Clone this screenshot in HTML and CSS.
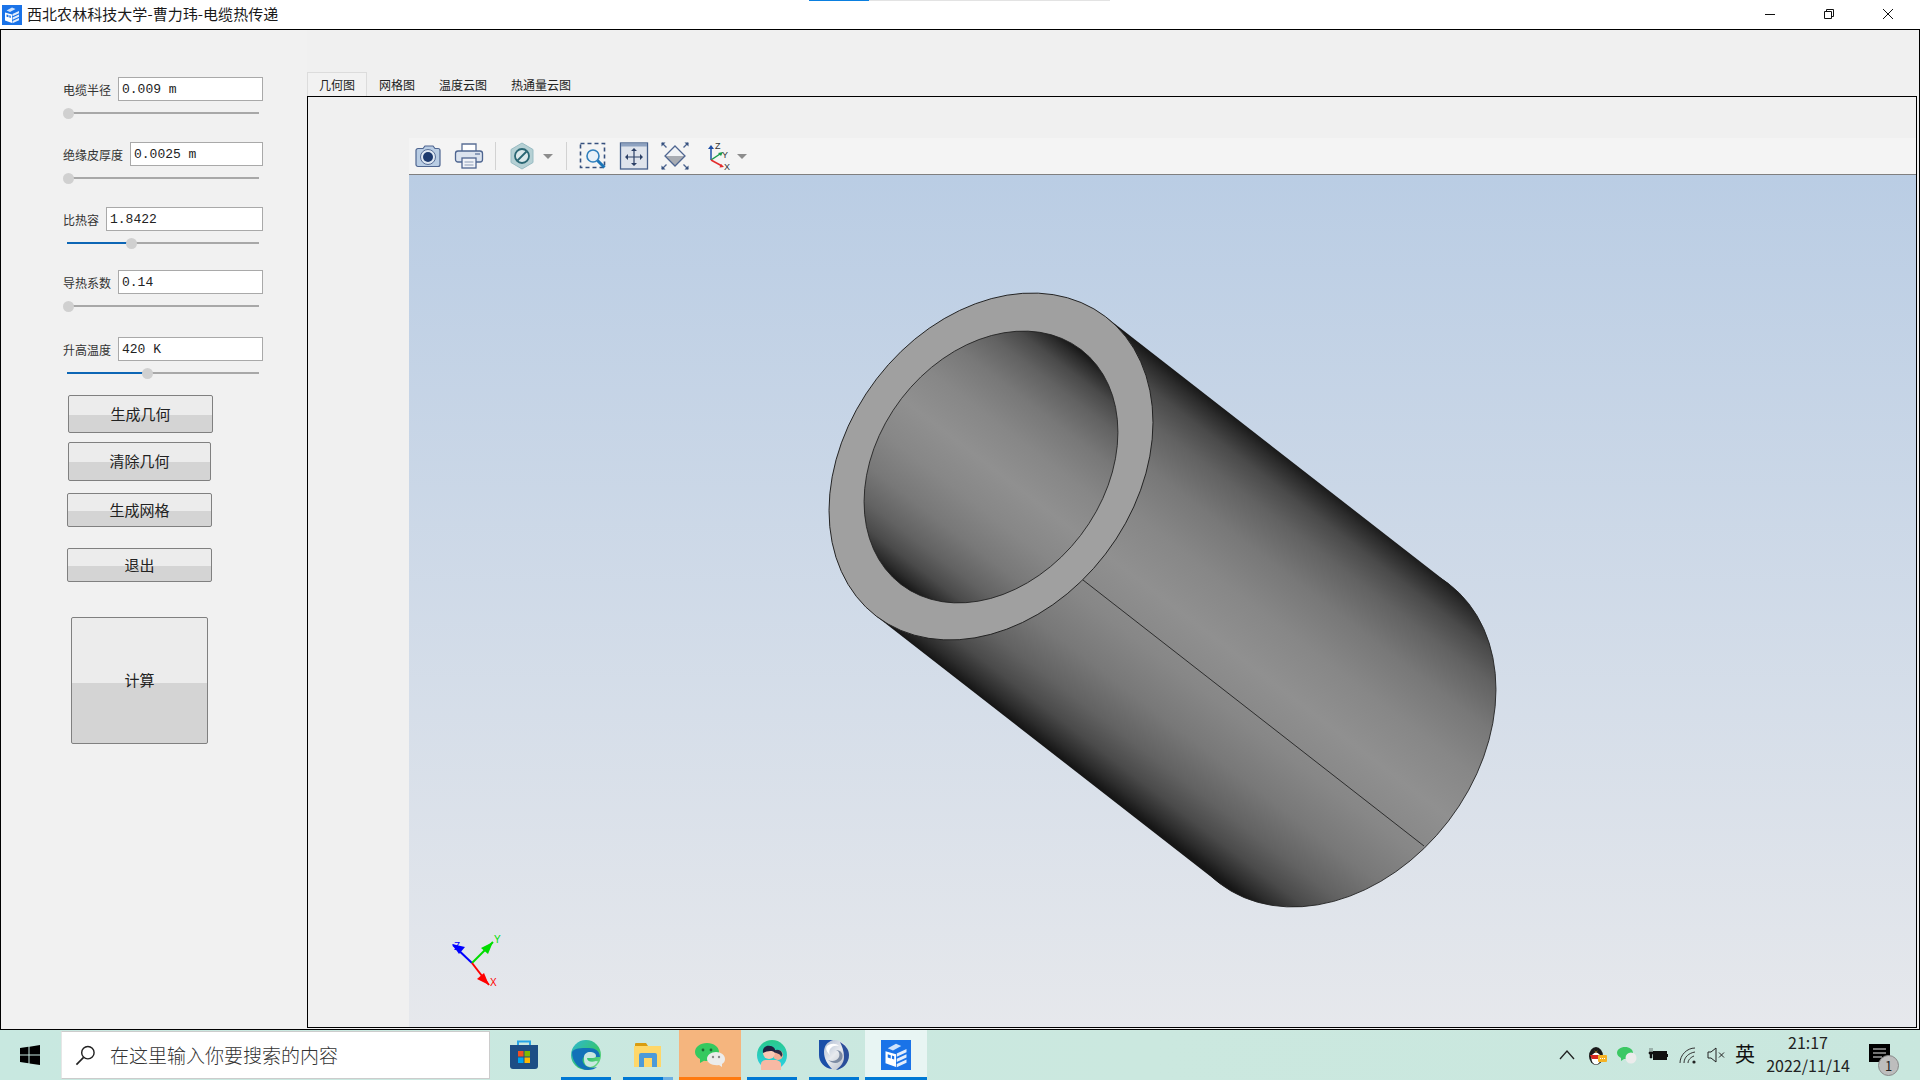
FILE: index.html
```html
<!DOCTYPE html>
<html lang="zh-CN">
<head>
<meta charset="utf-8">
<title>西北农林科技大学-曹力玮-电缆热传递</title>
<link rel="stylesheet" href="styles.css">
</head>
<body>
<div class="screen">
  <header class="titlebar">
    <svg class="title-icon" viewBox="0 0 20 20"><rect width="20" height="20" fill="#1a73e8"/><path d="M4.500 5.500L10 2.500l3.500 1.500L8 7z" fill="#cfe2fb"/><path d="M3 7.500L10 9.500V18L3 15.500z" fill="#fff"/><path d="M4.500 9.500l2 .6v2.200l-2-.6zM7.300 10.300l1.500.5V13l-1.500-.5z" fill="#1a73e8"/><path d="M10.500 9l6.500-3v2.200l-6.500 3zM10.500 12.500l6.500-3v2.200l-6.500 3zM10.500 16l6.500-3v2.200l-6.500 3z" fill="#e4eefc"/></svg>
    <span class="title-text">西北农林科技大学-曹力玮-电缆热传递</span>
    <div class="progress"><span class="progress-on"></span></div>
    <div class="winbtns">
      <svg class="winbtn" viewBox="0 0 12 12"><path d="M1 6.500h10" stroke="#111" fill="none"/></svg>
      <svg class="winbtn" viewBox="0 0 12 12"><path d="M1.500 3.500h7v7h-7zM3.500 3.500v-2h7v7h-2" stroke="#111" fill="none"/></svg>
      <svg class="winbtn" viewBox="0 0 12 12"><path d="M1 1l10 10M11 1L1 11" stroke="#111" fill="none"/></svg>
    </div>
  </header>

  <main class="window">
    <aside class="panel">
      <section class="field field-a">
        <div class="row"><label class="lbl">电缆半径</label><div class="input">0.009 m</div></div>
        <div class="slider"><div class="fill" style="width:1px"><i class="thumb"></i></div></div>
      </section>
      <section class="field field-b">
        <div class="row"><label class="lbl">绝缘皮厚度</label><div class="input">0.0025 m</div></div>
        <div class="slider"><div class="fill" style="width:1px"><i class="thumb"></i></div></div>
      </section>
      <section class="field field-b">
        <div class="row"><label class="lbl">比热容</label><div class="input">1.8422</div></div>
        <div class="slider"><div class="fill" style="width:64px"><i class="thumb"></i></div></div>
      </section>
      <section class="field field-c">
        <div class="row"><label class="lbl">导热系数</label><div class="input">0.14</div></div>
        <div class="slider"><div class="fill" style="width:1px"><i class="thumb"></i></div></div>
      </section>
      <section class="field field-d">
        <div class="row"><label class="lbl">升高温度</label><div class="input">420 K</div></div>
        <div class="slider"><div class="fill" style="width:80px"><i class="thumb"></i></div></div>
      </section>
      <button class="btn btn-1"><span class="btn-label">生成几何</span></button>
      <button class="btn btn-2"><span class="btn-label">清除几何</span></button>
      <button class="btn btn-3"><span class="btn-label">生成网格</span></button>
      <button class="btn btn-4"><span class="btn-label">退出</span></button>
      <button class="btn btn-5"><span class="btn-label">计算</span></button>
    </aside>

    <div class="workspace">
      <nav class="tabs">
        <span class="tab tab-on">几何图</span>
        <span class="tab">网格图</span>
        <span class="tab">温度云图</span>
        <span class="tab">热通量云图</span>
      </nav>
      <div class="pane">
        <div class="view">
          <div class="toolbar">
            <svg class="tool" viewBox="0 0 30 30"><path d="M3 9.500a2 2 0 0 1 2-2h5l2-2.500h8l2 2.500h3a2 2 0 0 1 2 2v14a2 2 0 0 1-2 2H5a2 2 0 0 1-2-2z" fill="#b9cde4" stroke="#4e6590" stroke-width="1.200"/><circle cx="15" cy="16" r="7.500" fill="#dfe8f3" stroke="#5a7098"/><circle cx="15" cy="16" r="5" fill="#1d3a6e"/></svg>
            <svg class="tool" viewBox="0 0 30 30"><path d="M8 10V3h14v7" fill="#fff" stroke="#5a6f95" stroke-width="1.300"/><rect x="1.500" y="10" width="27" height="11" rx="2.500" fill="#dbe3ee" stroke="#4e6590" stroke-width="1.300"/><rect x="8" y="17" width="14" height="10" fill="#f2f4f8" stroke="#4e6590" stroke-width="1.300"/><path d="M10.500 21h9M10.500 24h9" stroke="#8b9bb6" stroke-width="1.200"/><path d="M21 13h5" stroke="#6f85a8" stroke-width="1.500"/></svg>
            <i class="sep"></i>
            <svg class="tool" viewBox="0 0 30 30"><path d="M15 2l11 6.500v13L15 28 4 21.500v-13z" fill="#b5d0d4" stroke="#98bcc3"/><circle cx="15" cy="15" r="7" fill="#dbe8ea" stroke="#2a6673" stroke-width="1.800"/><path d="M10.500 19.500l9-9" stroke="#2a6673" stroke-width="1.800"/></svg>
            <i class="arrow"></i>
            <i class="sep sep-2"></i>
            <svg class="tool" viewBox="0 0 30 30"><rect x="2.500" y="2.500" width="24" height="24" fill="none" stroke="#36507e" stroke-width="1.600" stroke-dasharray="4 3"/><circle cx="15" cy="15" r="6" fill="#e8f1f8" stroke="#2f7fbd" stroke-width="1.600"/><path d="M19.500 19.500l7 7" stroke="#1b75b8" stroke-width="3"/></svg>
            <svg class="tool" viewBox="0 0 30 30"><rect x="1.500" y="2" width="27" height="26" fill="#dfe4ec" stroke="#46608c" stroke-width="1.300"/><rect x="2" y="2.500" width="26" height="3" fill="#8ea2c0"/><path d="M15 8v16M7 16h16" stroke="#2c4066" stroke-width="1.200"/><path d="M15 7l3 3h-6zM15 25l3-3h-6zM6 16l3-3v6zM24 16l-3-3v6z" fill="#2c4066"/></svg>
            <svg class="tool" viewBox="0 0 30 30"><path d="M15 5l10 10H5z" fill="#f2f3f5"/><path d="M5 15h20L15 25z" fill="#a9acb2"/><path d="M15 5l10 10-10 10L5 15z" fill="none" stroke="#4e6590" stroke-width="1.300"/><path d="M2 2l4.500 4.500M28 2l-4.500 4.500M2 28l4.500-4.500M28 28l-4.500-4.500" stroke="#4e6590" stroke-width="1.400"/><path d="M1.500 1.500h4l-4 4zM28.500 1.500h-4l4 4zM1.500 28.500h4l-4-4zM28.500 28.500h-4l4-4z" fill="#35507e"/></svg>
            <svg class="tool tool-axes" viewBox="0 0 30 30"><path d="M9 19V7" stroke="#1d4fa8" stroke-width="1.500"/><path d="M9 4l3 4H6z" fill="#1d4fa8"/><path d="M9 19l9-6" stroke="#179b4c" stroke-width="1.500"/><path d="M21 11l-2 4-3-3z" fill="#179b4c"/><path d="M9 19l11 6" stroke="#e32b2b" stroke-width="1.500"/><path d="M22 26l-4.500.5 1.500-3.500z" fill="#e32b2b"/><text x="13" y="8" class="axis-mini">Z</text><text x="20" y="17" class="axis-mini">Y</text><text x="22" y="29" class="axis-mini">X</text></svg>
            <i class="arrow arrow-2"></i>
          </div>
          <div class="canvas">
            <svg class="scene" viewBox="409 175 1507 852" preserveAspectRatio="none">
              <defs>
                <linearGradient id="bodyShade" gradientUnits="userSpaceOnUse" x1="1105.700" y1="316.800" x2="876.300" y2="616.200">
                  <stop offset="0" stop-color="#161616"/><stop offset=".03" stop-color="#2c2c2c"/><stop offset=".08" stop-color="#4a4a4a"/><stop offset=".15" stop-color="#626262"/><stop offset=".25" stop-color="#787878"/><stop offset=".37" stop-color="#878787"/><stop offset=".5" stop-color="#909090"/><stop offset=".63" stop-color="#878787"/><stop offset=".75" stop-color="#787878"/><stop offset=".85" stop-color="#626262"/><stop offset=".92" stop-color="#4a4a4a"/><stop offset=".97" stop-color="#2c2c2c"/><stop offset="1" stop-color="#161616"/>
                </linearGradient>
                <linearGradient id="holeShade" gradientUnits="userSpaceOnUse" x1="1081" y1="349.600" x2="901" y2="584.400">
                  <stop offset="0" stop-color="#161616"/><stop offset=".03" stop-color="#2c2c2c"/><stop offset=".08" stop-color="#4a4a4a"/><stop offset=".15" stop-color="#626262"/><stop offset=".25" stop-color="#787878"/><stop offset=".37" stop-color="#878787"/><stop offset=".5" stop-color="#909090"/><stop offset=".63" stop-color="#878787"/><stop offset=".75" stop-color="#787878"/><stop offset=".85" stop-color="#626262"/><stop offset=".92" stop-color="#4a4a4a"/><stop offset=".97" stop-color="#2c2c2c"/><stop offset="1" stop-color="#161616"/>
                </linearGradient>
              </defs>
              <path d="M1448.700 583.800A187.500 143.260 -52.550 1 1 1219.300 883.200A187.500 143.260 -52.550 1 1 1448.700 583.800Z" fill="url(#bodyShade)" stroke="#222" stroke-width=".9"/>
              <polygon points="1105.700,316.800 1448.700,583.800 1219.300,883.200 876.300,616.200" fill="url(#bodyShade)"/>
              <path d="M1083 580L1424 846" stroke="#222" stroke-width=".9"/>
              <ellipse cx="991" cy="466.500" rx="188.600" ry="144.100" transform="rotate(-52.550 991 466.500)" fill="#a0a0a0" stroke="#222" stroke-width=".9"/>
              <path d="M1081 349.600A147 112 -52.450 1 1 901 584.400A147 112 -52.450 1 1 1081 349.600Z" fill="url(#holeShade)" stroke="#222" stroke-width=".9"/>
              <path d="M472 963L453 945" stroke="#0000ff" stroke-width="2"/>
              <path d="M452 944l13 3-6 7z" fill="#0000ff"/>
              <path d="M472 963L493 942" stroke="#00dd00" stroke-width="2"/>
              <path d="M493 942l-5 12-7-6z" fill="#00dd00"/>
              <path d="M472 963L489 985" stroke="#ff0000" stroke-width="2"/>
              <path d="M489 985l-12-6 7-6z" fill="#ff0000"/>
              <text x="454" y="950" class="triad triad-z">Z</text>
              <text x="494" y="943" class="triad triad-y">Y</text>
              <text x="490" y="986" class="triad triad-x">X</text>
            </svg>
          </div>
        </div>
      </div>
    </div>
  </main>

  <footer class="taskbar">
    <div class="start"><svg class="start-icon" viewBox="0 0 20 20"><path d="M0 3l8.500-1.200V9.500H0zM9.500 1.700L20 0v9.500H9.500zM0 10.500h8.500v7.700L0 17zM9.500 10.500H20V20L9.500 18.400z" fill="#000"/></svg></div>
    <div class="search">
      <svg class="search-icon" viewBox="0 0 22 22"><circle cx="13.500" cy="8" r="6.500" fill="none" stroke="#222" stroke-width="1.500"/><path d="M9 13L1.500 20.500" stroke="#222" stroke-width="1.700"/></svg>
      <span class="search-text">在这里输入你要搜索的内容</span>
    </div>
    <div class="apps">
      <div class="tile">
        <svg class="app" viewBox="0 0 30 30"><path d="M9 5V1.500h12V5" fill="none" stroke="#27a4e6" stroke-width="2"/><path d="M1 5h28v21a3 3 0 0 1-3 3H4a3 3 0 0 1-3-3z" fill="#1d4e85"/><rect x="9" y="11" width="5.500" height="5.500" fill="#f25022"/><rect x="15.500" y="11" width="5.500" height="5.500" fill="#7fba00"/><rect x="9" y="17.500" width="5.500" height="5.500" fill="#00a4ef"/><rect x="15.500" y="17.500" width="5.500" height="5.500" fill="#ffb900"/></svg>
      </div>
      <div class="tile tile-run">
        <svg class="app" viewBox="0 0 30 30"><defs><linearGradient id="edgeA" x1="0" y1="0" x2="1" y2="1"><stop offset="0" stop-color="#2fb6d6"/><stop offset=".6" stop-color="#35c46f"/><stop offset="1" stop-color="#7fe08a"/></linearGradient></defs><circle cx="15" cy="15" r="15" fill="url(#edgeA)"/><path d="M1 12c0 10 7 18 16 18 4 0 7-1 9-3-5 2-11 0-13-3-3-4-1-8 3-9 3-1 6 0 6 2h7c0-6-5-9-11-9C10 8 3 8 1 12z" fill="#1272b8"/><path d="M13 17c0-3 3-5 6-5 3 0 6 1 6 4 0 1-1 2-3 2h-6c0 3 4 5 9 3l2 .5c-3 5-8 7-12 4-2-2-2-5-2-8z" fill="#c8e8e0"/></svg>
        <i class="bar"></i>
      </div>
      <div class="tile tile-run">
        <svg class="app" viewBox="0 0 30 30"><path d="M2 4a1 1 0 0 1 1-1h10l2 3H2z" fill="#d99c10"/><rect x="1" y="6" width="27" height="21" fill="#ffd768"/><path d="M6 27V15a2 2 0 0 1 2-2h14a2 2 0 0 1 2 2v12h-5v-9h-8v9z" fill="#4d9ad8"/></svg>
        <i class="bar bar-split"></i>
      </div>
      <div class="tile tile-wechat">
        <svg class="app" viewBox="0 0 30 30"><path d="M12 3c7 0 12 4 12 9s-5 9-12 9c-1 0-2 0-3-.3L5 23v-4C2 17.500 0 15 0 12c0-5 5-9 12-9z" fill="#35c95f"/><circle cx="8" cy="10" r="1.400" fill="#1c6a35"/><circle cx="16" cy="10" r="1.400" fill="#1c6a35"/><path d="M21 12c5 0 9 3 9 7 0 2-1 4-3 5v3l-3-2c-6 1-12-2-12-6 0-4 4-7 9-7z" fill="#ececec"/><circle cx="18" cy="17" r="1.200" fill="#888"/><circle cx="24" cy="17" r="1.200" fill="#888"/></svg>
        <i class="bar bar-wechat"></i>
      </div>
      <div class="tile tile-run">
        <svg class="app" viewBox="0 0 30 30"><defs><linearGradient id="avaBg" x1="0" y1="0" x2="0" y2="1"><stop offset="0" stop-color="#29c98a"/><stop offset="1" stop-color="#2ad0ee"/></linearGradient></defs><circle cx="15" cy="15" r="15" fill="url(#avaBg)"/><path d="M4 30V24c0-3 3-4 6-4h8c3 0 6 2 6 4v6z" fill="#f8b9a4"/><circle cx="21" cy="15" r="5" fill="#f5ad95"/><path d="M16 12c1-3 8-3 9 1 1 2 0 3-1 4 0-3-5-4-8-5z" fill="#2c2c46"/><circle cx="12" cy="13" r="6" fill="#fbc8b4"/><path d="M6 13c-1-6 4-8 7-7 3 0 6 2 5 7-2-3-8-2-12 0z" fill="#1f2140"/></svg>
        <i class="bar"></i>
      </div>
      <div class="tile tile-run">
        <svg class="app" viewBox="0 0 30 30"><defs><linearGradient id="swirlA" x1="0" y1="0" x2="1" y2="1"><stop offset="0" stop-color="#9fb0cb"/><stop offset=".5" stop-color="#e8eaee"/><stop offset="1" stop-color="#aeb6c4"/></linearGradient></defs><circle cx="15" cy="15" r="15" fill="url(#swirlA)"/><path d="M0 0h14c-6 2-9 6-9 12 0 6 3 12 8 17C5 28 0 22 0 15z" fill="#1b4fa8"/><path d="M21 2c5 3 9 7 9 13 0 8-6 14-13 15 4-3 8-7 8-13 0-6-2-11-4-15z" fill="#2a4f9a"/><path d="M9 20c4 2 9 1 11-3 1-3 0-6-3-7 5 0 8 4 6 9-2 4-8 6-14 1z" fill="#7d8ba3"/><path d="M8 6c4-3 9-3 12 0-4-1-7 0-9 3-1 2-1 4 0 6-3-3-5-6-3-9z" fill="#fff"/></svg>
        <i class="bar"></i>
      </div>
      <div class="tile tile-active">
        <svg class="app" viewBox="0 0 20 20"><rect width="20" height="20" fill="#1a73e8"/><path d="M4.500 5.500L10 2.500l3.500 1.500L8 7z" fill="#cfe2fb"/><path d="M3 7.500L10 9.500V18L3 15.500z" fill="#fff"/><path d="M4.500 9.500l2 .6v2.200l-2-.6zM7.300 10.300l1.500.5V13l-1.500-.5z" fill="#1a73e8"/><path d="M10.500 9l6.500-3v2.200l-6.500 3zM10.500 12.500l6.500-3v2.200l-6.500 3zM10.500 16l6.500-3v2.200l-6.500 3z" fill="#e4eefc"/></svg>
        <i class="bar"></i>
      </div>
    </div>
    <div class="tray">
      <div class="tray-icons">
        <svg class="tray-svg" viewBox="0 0 20 20"><path d="M3 14l7-8 7 8" fill="none" stroke="#222" stroke-width="1.300"/></svg>
        <svg class="tray-svg" viewBox="0 0 20 20"><ellipse cx="9" cy="11" rx="7" ry="9" fill="#1a1a1a"/><ellipse cx="9" cy="13.500" rx="4.500" ry="6" fill="#fff"/><path d="M3 10h11l-2 4H5z" fill="#d7261e"/><path d="M7 5l2 2 2-2-2 3z" fill="#f5b324"/><rect x="11" y="10" width="9" height="7" rx="1" fill="#f5b324"/><path d="M13 13.500h5" stroke="#fff" stroke-dasharray="1 1"/></svg>
        <svg class="tray-svg" viewBox="0 0 20 20"><path d="M8 2c4.500 0 8 2.500 8 6s-3.500 6-8 6h-1l-3 2v-3C2 12 0 10 0 8c0-3.500 3.500-6 8-6z" fill="#3cc864"/><circle cx="14" cy="13" r="5.500" fill="#ececec"/></svg>
        <svg class="tray-svg" viewBox="0 0 20 20"><rect x="5.500" y="6.500" width="13" height="8" fill="#111" stroke="#111"/><rect x="18.500" y="9" width="1.500" height="3" fill="#111"/><path d="M2 3v4M4 3v4M1 7h4v2H4v4H2V9H1z" fill="#111" stroke="#111" stroke-width=".5"/></svg>
        <svg class="tray-svg" viewBox="0 0 20 20"><g fill="none" stroke="#333" stroke-width="1"><path d="M2 18C2 10 9 3 17 3"/><path d="M6 18c0-6 5-10 11-11"/><path d="M10 18c0-3 3-6 6-7"/></g><circle cx="16" cy="17" r="1.600" fill="#222"/></svg>
        <svg class="tray-svg" viewBox="0 0 20 20"><path d="M1 7h3l5-4v14l-5-4H1z" fill="none" stroke="#222"/><path d="M12 7.500l5 5M17 7.500l-5 5" stroke="#222" fill="none"/></svg>
        <span class="ime">英</span>
      </div>
      <div class="clock"><span>21:17</span><span>2022/11/14</span></div>
      <div class="notify">
        <svg class="notify-svg" viewBox="0 0 21 18"><path d="M0 0h21v18H0z" fill="#000"/><path d="M4 5h13M4 9h13M4 13h9" stroke="#e8e8e8"/></svg>
        <span class="badge">1</span>
      </div>
    </div>
  </footer>
</div>
</body>
</html>
```

FILE: styles.css
```css
* { box-sizing: border-box; }
html, body { margin: 0; padding: 0; }
body { font-family: "Noto Sans CJK SC", "Noto Sans", sans-serif; color: #222; background: #fff; overflow: hidden; }
.screen { width: 1920px; height: 1080px; display: flex; flex-direction: column; }

/* Title bar */
.titlebar { position: relative; height: 29px; background: #fff; display: flex; align-items: center; padding-left: 2px; flex: none; }
.title-icon { width: 20px; height: 20px; flex: none; }
.title-text { margin-left: 5px; margin-bottom: 2px; font-size: 15px; line-height: 20px; color: #1a1a1a; letter-spacing: .05px; }
.progress { position: absolute; left: 809px; top: 0; width: 301px; height: 1px; background: #e3e3e3; }
.progress-on { display: block; width: 60px; height: 1px; background: #0a7fe0; }
.winbtns { margin-left: auto; display: flex; gap: 47px; margin-right: 26px; margin-bottom: 2px; }
.winbtn { width: 12px; height: 12px; flex: none; }

/* Window */
.window { flex: none; height: 1001px; border: 1px solid #000; display: flex; background: #f0f0f0; }
.panel { width: 306px; flex: none; display: flex; flex-direction: column; align-items: flex-start; background: #f1f1f1; padding-left: 62px; padding-top: 47px; }
.field { width: 200px; }
.field-b { margin-top: 23px; }
.field-c { margin-top: 21px; }
.field-d { margin-top: 25px; }
.row { display: flex; align-items: center; gap: 7px; height: 24px; }
.lbl { font-size: 12px; color: #333; line-height: 24px; white-space: nowrap; margin-top: 1px; }
.input { flex: 1; height: 24px; background: #fff; border: 1px solid #a9a9a9; font-family: "Liberation Mono", monospace; font-size: 13px; line-height: 24px; padding-left: 3px; color: #222; }
.slider { height: 2px; margin: 11px 4px 5px 4px; background: #a8a8a8; position: relative; }
.fill { height: 2px; background: #0d66b5; position: relative; }
.thumb { position: absolute; right: -6px; top: -4px; width: 11px; height: 11px; border-radius: 50%; background: #d0d0d0; }
.btn { display: flex; align-items: center; justify-content: center; font-family: "Noto Sans CJK SC", sans-serif; font-size: 15px; color: #222; border: 1px solid #808080; border-radius: 2px; padding: 0 0 2px; background: linear-gradient(#ececec 0 52%, #d4d4d4 52% 100%); }
.btn-label { display: block; }
.btn-1 { margin: 16px 0 0 5px; width: 145px; height: 38px; }
.btn-2 { margin: 9px 0 0 5px; width: 143px; height: 39px; }
.btn-3 { margin: 12px 0 0 4px; width: 145px; height: 34px; }
.btn-4 { margin: 21px 0 0 4px; width: 145px; height: 34px; }
.btn-5 { margin: 35px 0 0 8px; width: 137px; height: 127px; }

/* Tabs */
.workspace { flex: 1; min-width: 0; display: flex; flex-direction: column; padding: 42px 2px 1px 0; }
.tabs { display: flex; height: 24px; flex: none; }
.tab { font-size: 12px; line-height: 24px; padding: 1px 12px 0; color: #222; }
.tab-on { background: #f2f2f2; border: 1px solid #dcdcdc; border-bottom: 0; padding: 0 11px; }
.pane { flex: 1; min-height: 0; border: 1px solid #000; padding: 41px 0 0 101px; display: flex; background: #f0f0f0; }
.view { flex: 1; min-width: 0; display: flex; flex-direction: column; }

/* Toolbar */
.toolbar { height: 37px; flex: none; background: #f4f4f4; border-bottom: 1px solid #7f7f7f; display: flex; align-items: center; gap: 11px; padding-left: 4px; }
.tool { width: 30px; height: 30px; flex: none; }
.tool-axes { margin-left: 1px; }
.axis-mini { font-family: "Liberation Sans", sans-serif; font-size: 9px; fill: #333; }
.sep { width: 1px; height: 28px; background: #d2d2d2; flex: none; }
.sep-2 { margin-left: 2px; }
.arrow { width: 0; height: 0; flex: none; margin-left: -5px; border-left: 5.500px solid transparent; border-right: 5.500px solid transparent; border-top: 5px solid #8c8c8c; }
.arrow-2 { margin-left: -6px; }

/* Scene */
.canvas { flex: 1; min-height: 0; background: linear-gradient(#bacde4, #e6e8ec); }
.scene { display: block; width: 100%; height: 100%; }
.triad { font-family: "Liberation Sans", sans-serif; font-size: 10px; }
.triad-z { fill: #0000ff; }
.triad-y { fill: #00dd00; }
.triad-x { fill: #ff0000; }

/* Taskbar */
.taskbar { flex: 1; min-height: 0; background: linear-gradient(90deg, #c8e8e0, #cbe8df 60%, #c9e7de); display: flex; align-items: stretch; }
.start { width: 61px; flex: none; display: flex; align-items: center; justify-content: center; padding-right: 1px; }
.start-icon { width: 20px; height: 20px; }
.search { width: 429px; flex: none; background: #fff; border: 1px solid #ccc; border-left-color: #e6e6e6; margin: 1px 0; display: flex; align-items: center; padding-left: 13px; }
.search-icon { width: 21px; height: 21px; flex: none; }
.search-text { margin-left: 14px; margin-bottom: 2px; font-size: 19px; color: #333; font-weight: 300; white-space: nowrap; }
.apps { display: flex; margin-left: 3px; }
.tile { width: 62px; flex: none; position: relative; display: flex; align-items: center; justify-content: center; padding-bottom: 1px; }
.app { width: 30px; height: 30px; }
.tile-wechat { background: #f5b57e; }
.tile-active { background: #e8f5f3; }
.bar { position: absolute; left: 6px; right: 6px; bottom: 0; height: 3px; background: #0078d4; }
.bar-split { background: linear-gradient(90deg, #0078d4 0 80%, #6cb0e4 80% 100%); }
.bar-wechat { left: 0; right: 0; background: #ff7a10; }
.tile-active .bar { left: 0; right: 0; }
.tray { margin-left: auto; display: flex; align-items: stretch; }
.tray-icons { display: grid; grid-template-columns: 30px 30px 30px 32px 28px 30px 26px; align-items: center; justify-items: center; }
.tray-svg { width: 20px; height: 20px; }
.ime { font-size: 20px; color: #111; margin-bottom: 3px; }
.clock { width: 100px; display: flex; flex-direction: column; align-items: center; justify-content: center; font-size: 16px; line-height: 23px; color: #222; padding-bottom: 2px; }
.notify { width: 62px; position: relative; display: flex; align-items: center; padding-left: 11px; }
.notify-svg { width: 21px; height: 18px; margin-top: -5px; }
.badge { position: absolute; left: 20px; top: 25px; width: 21px; height: 21px; border-radius: 50%; background: #bdbdbd; border: 1px solid #888; font-size: 13px; line-height: 19px; text-align: center; color: #222; }
```
